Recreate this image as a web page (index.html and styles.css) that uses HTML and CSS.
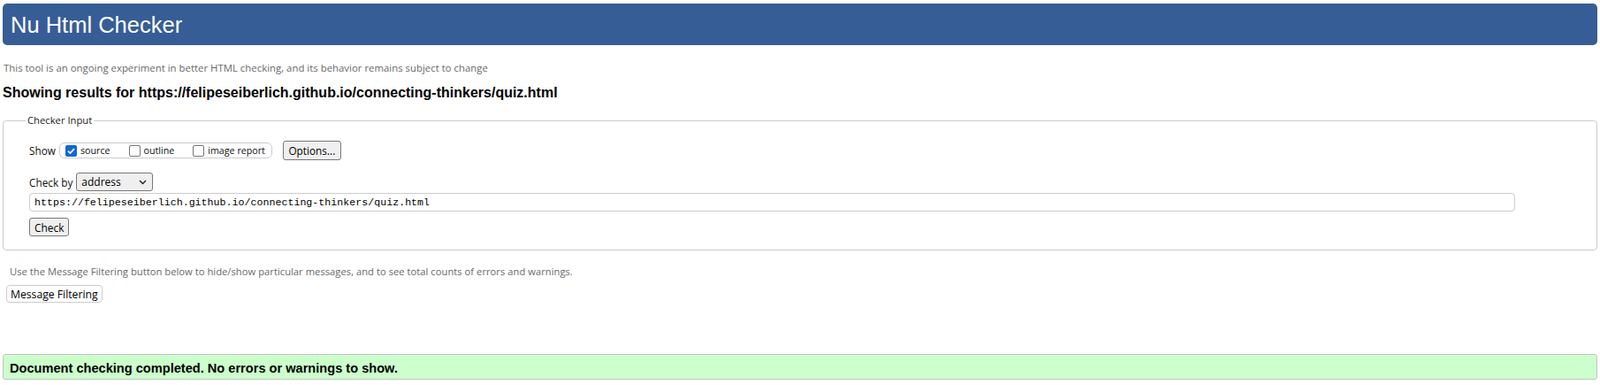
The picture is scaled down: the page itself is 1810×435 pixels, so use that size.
FILE: index.html
```html
<!DOCTYPE html>
<html lang="en">
<head>
<meta charset="utf-8">
<title>Nu Html Checker</title>
<link rel="stylesheet" href="styles.css">
</head>
<body>
<header class="banner"><h1 class="title">Nu Html Checker</h1></header>
<p class="about">This tool is an ongoing experiment in better HTML checking, and its behavior remains subject to change</p>
<h2 class="results">Showing results for https://felipeseiberlich.github.io/connecting-thinkers/quiz.html</h2>
<fieldset class="checker">
  <legend class="legend">Checker Input</legend>
  <div class="row row-show">
    <span class="label">Show</span>
    <span class="pill">
      <span class="opt"><span class="cb cb-on"><svg width="13" height="13" viewBox="0 0 13 13"><path d="M3 6.6 L5.4 9 L10 4.2" fill="none" stroke="#fff" stroke-width="1.7"/></svg></span>source</span>
      <span class="opt"><span class="cb"></span>outline</span>
      <span class="opt"><span class="cb"></span>image report</span>
    </span>
    <span class="btn btn-options">Options...</span>
  </div>
  <div class="row row-by">
    <span class="label">Check by</span>
    <span class="select">address<svg class="chev" width="9" height="6" viewBox="0 0 9 6"><path d="M1 1 L4.5 4.5 L8 1" fill="none" stroke="#222" stroke-width="1.4"/></svg></span>
  </div>
  <div class="url">https://felipeseiberlich.github.io/connecting-thinkers/quiz.html</div>
  <span class="btn btn-check">Check</span>
</fieldset>
<p class="hint">Use the Message Filtering button below to hide/show particular messages, and to see total counts of errors and warnings.</p>
<span class="btn-light">Message Filtering</span>
<div class="success">Document checking completed. No errors or warnings to show.</div>
</body>
</html>
```
FILE: styles.css
```css
* { box-sizing: border-box; }
body { margin: 0; font-family: "Open Sans", sans-serif; color: #000; background: #fff; }
.banner { margin: 4px 3px 0; height: 47px; padding-top: 1px; background: #365d96; border-radius: 5px; }
.title { margin: 0; padding-left: 9px; font: 400 25.5px/46px "Liberation Sans", Arial, sans-serif; color: #fff; }
.about { margin: 18px 0 0 4px; font-size: 11.4px; line-height: 16px; color: #6a6a6a; }
.results { margin: 11px 0 0 3px; font: 700 16px/18px "Liberation Sans", Arial, sans-serif; color: #000; }
.checker { margin: 14px 3px 0; border: 1px solid #ccc; border-radius: 4px; padding: 0 29px 15px; min-width: 0; }
.legend { margin-left: -4px; padding: 0 2px; font-size: 11.25px; line-height: 16px; color: #222; }
.row { display: flex; align-items: center; color: #111; }
.row-show { height: 22px; margin-top: 15px; }
.label { margin-right: 4px; font-size: 11.8px; }
.pill { display: flex; align-items: center; height: 18px; border: 1px solid #ccc; border-radius: 6px; padding: 0 7px 0 6px; font-size: 10.7px; }
.opt { display: flex; align-items: center; margin-right: 21px; }
.opt:last-child { margin-right: 0; }
.cb { width: 13px; height: 13px; border: 1.5px solid #767676; border-radius: 2px; margin-right: 4px; background: #fff; }
.cb-on { border: 0; background: #1366d6; }
.cb svg { display: block; }
.btn { display: flex; align-items: center; width: fit-content; height: 22px; padding: 0 5.5px; background: #efefef; border: 1px solid #767676; border-radius: 3px; font-size: 11.8px; color: #000; }
.btn-options { margin-left: 12px; }
.row-by { height: 21px; margin-top: 14px; }
.select { display: flex; align-items: center; justify-content: space-between; width: 87px; height: 21px; padding: 0 6px 0 5px; border: 1px solid #767676; border-radius: 3px; background: #efefef; font-size: 12px; color: #000; }
.chev { display: block; }
.url { margin-top: 2px; height: 21px; width: 1681px; border: 1px solid #ccc; border-radius: 4px; padding: 0 5px; font: 11.65px/19px "Liberation Mono", monospace; color: #000; }
.btn-check { margin-top: 7px; height: 21px; padding: 0 5px; font-size: 11.9px; }
.hint { margin: 16px 0 0 11px; font-size: 11.25px; line-height: 16px; color: #6a6a6a; }
.btn-light { display: flex; align-items: center; width: fit-content; margin: 7px 0 0 7px; height: 20px; padding: 0 4px; border: 1px solid #ccc; border-radius: 4px; font-size: 12.2px; background: #fff; color: #000; }
.success { margin: 58px 3px 0; height: 29px; padding: 2px 0 0 7px; background: #ccffcc; border: 1px solid #c4c4c4; border-radius: 3px; font: 700 14.6px/26px "Liberation Sans", Arial, sans-serif; color: #000; }
```
